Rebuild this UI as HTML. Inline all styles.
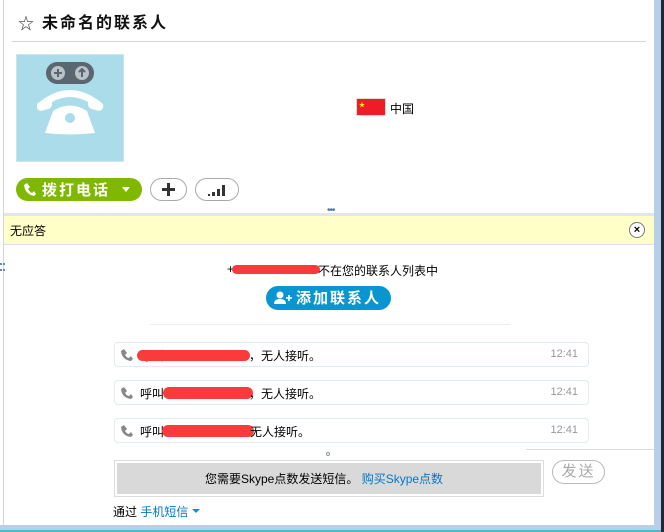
<!DOCTYPE html>
<html><head><meta charset="utf-8"><style>
*{margin:0;padding:0;box-sizing:border-box}
body{width:664px;height:532px;overflow:hidden;background:#fff;position:relative;font-family:"Liberation Sans","Noto Sans CJK SC",sans-serif;font-size:12px;color:#000}
.a{position:absolute}
.red{position:absolute;background:#fb3b3b;border-radius:6px;height:9px}
.msg{position:absolute;left:114px;width:475px;height:25px;border:1px solid #e3eaf0;border-radius:4px;background:#fff}
.msg .tm{position:absolute;right:10px;top:5px;color:#999;font-size:11px}
.msg svg{position:absolute;left:6px;top:6px}
</style></head><body>
<div class="a" style="left:3px;top:0;width:1px;height:525px;background:#d6d6d6"></div>
<div class="a" style="left:654px;top:0;width:7px;height:532px;background:#b9cfe8"></div>
<div class="a" style="left:661px;top:0;width:3px;height:532px;background:#1a2a38"></div>
<div class="a" style="left:0;top:525px;width:661px;height:7px;background:#b9cfe8"></div>
<div class="a" style="left:0;top:530px;width:661px;height:2px;background:#4fb8d8"></div>

<div class="a" style="left:18px;top:10px;font-size:16px;color:#333">☆</div>
<div class="a" style="left:42px;top:9px;font-size:16px;font-weight:bold;letter-spacing:2px;color:#111">未命名的联系人</div>
<div class="a" style="left:12px;top:41px;width:634px;height:1px;background:#d6d6d6"></div>

<div class="a" style="left:16px;top:54px;width:108px;height:108px;background:#abdcea;border:1px solid #cfe3ea"></div>
<svg class="a" style="left:16px;top:54px" width="108" height="108">
<rect x="30" y="8" width="48" height="22" rx="11" fill="#5a6670"/>
<circle cx="42" cy="19" r="7" fill="#b9c2c8"/><circle cx="66" cy="19" r="7" fill="#b9c2c8"/>
<path d="M38 19h8M42 15v8" stroke="#5a6670" stroke-width="2"/><path d="M66 23v-8M63 18l3-3 3 3" stroke="#5a6670" stroke-width="2" fill="none"/>
<path d="M21 50 Q54 22 87 50 Q88 56 83 57 L76 55 Q72 54 72 50 L72 48 Q54 38 36 48 L36 50 Q36 54 32 55 L25 57 Q20 56 21 50Z" fill="#fff"/>
<path d="M29 79 L37 57 Q54 46 71 57 L79 79 Q54 82 29 79Z" fill="#fff"/>
<circle cx="54" cy="64" r="5" fill="#abdcea"/>
</svg>

<div class="a" style="left:356px;top:98px;width:30px;height:18px;background:#ee1c25;border:1px solid #ddd"></div>
<div class="a" style="left:359px;top:100px;color:#ff0;font-size:6px">★</div>
<div class="a" style="left:390px;top:100px;font-size:12px">中国</div>

<div class="a" style="left:16px;top:178px;width:126px;height:23px;background:#7eb800;border-radius:12px"></div>
<svg class="a" style="left:24px;top:183px" width="12" height="13"><path d="M3 0L6 4L4 6Q6 9 8 10L10 8L12 11L10 13Q1 11 0 2Z" fill="#fff"/></svg>
<div class="a" style="left:42px;top:179px;color:#fff;font-size:15px;font-weight:bold;letter-spacing:2px">拨打电话</div>
<div class="a" style="left:122px;top:187px;width:0;height:0;border-left:4px solid transparent;border-right:4px solid transparent;border-top:5px solid #fff"></div>
<div class="a" style="left:150px;top:178px;width:37px;height:23px;border:1px solid #aaa;border-radius:12px"></div>
<svg class="a" style="left:162px;top:183px" width="13" height="13"><path d="M6.5 0v13M0 6.5h13" stroke="#333" stroke-width="3"/></svg>
<div class="a" style="left:195px;top:178px;width:44px;height:23px;border:1px solid #aaa;border-radius:12px"></div>
<svg class="a" style="left:208px;top:182px" width="20" height="15"><rect x="0" y="12" width="2" height="2" fill="#333"/><rect x="4" y="10" width="3" height="4" fill="#333"/><rect x="9" y="7" width="3" height="7" fill="#333"/><rect x="14" y="3" width="3" height="11" fill="#333"/></svg>

<div class="a" style="left:327px;top:205px;color:#5577aa;font-size:10px;letter-spacing:-1px">•••</div>
<div class="a" style="left:4px;top:213px;width:650px;height:3px;background:#e0e6ea"></div>
<div class="a" style="left:4px;top:216px;width:650px;height:29px;background:#ffffc8;border-bottom:1px solid #dde"></div>
<div class="a" style="left:10px;top:222px;font-size:12px">无应答</div>
<div class="a" style="left:629px;top:222px;width:16px;height:16px;border:1px solid #777;border-radius:50%;background:#fff;text-align:center;font-size:11px;line-height:14px;font-weight:bold">×</div>
<div class="a" style="left:0;top:263px;width:3px;height:8px;border-top:2px dotted #6688bb;border-bottom:2px dotted #6688bb"></div>

<div class="a" style="left:227px;top:262px;font-size:12px">+</div>
<div class="red" style="left:232px;top:265px;width:88px"></div>
<div class="a" style="left:318px;top:262px;font-size:12px">不在您的联系人列表中</div>
<div class="a" style="left:266px;top:286px;width:125px;height:24px;background:#0996d0;border-radius:12px"></div>
<svg class="a" style="left:274px;top:291px" width="20" height="14"><circle cx="6" cy="4" r="3.5" fill="#fff"/><path d="M0 13Q0 8 6 8Q12 8 12 13Z" fill="#fff"/><path d="M15 4v6M12 7h6" stroke="#fff" stroke-width="1.6"/></svg>
<div class="a" style="left:296px;top:287px;color:#fff;font-size:15px;font-weight:bold;letter-spacing:2px">添加联系人</div>
<div class="a" style="left:150px;top:324px;width:360px;height:1px;background:#eee"></div>

<div class="msg" style="top:342px"><svg width="12" height="12"><path d="M3 0L6 4L4 6Q6 9 8 9L10 7L12 10L10 12Q1 11 0 2Z" fill="#888"/></svg><span class="tm">12:41</span></div>
<div class="a" style="left:140px;top:347px">呼叫</div>
<div class="red" style="left:137px;top:350px;width:113px;height:11px"></div>
<div class="a" style="left:249px;top:347px">，无人接听。</div>
<div class="msg" style="top:380px"><svg width="12" height="12"><path d="M3 0L6 4L4 6Q6 9 8 9L10 7L12 10L10 12Q1 11 0 2Z" fill="#888"/></svg><span class="tm">12:41</span></div>
<div class="a" style="left:140px;top:385px">呼叫+</div>
<div class="red" style="left:163px;top:387px;width:90px;height:12px"></div>
<div class="a" style="left:249px;top:385px">，无人接听。</div>
<div class="msg" style="top:418px"><svg width="12" height="12"><path d="M3 0L6 4L4 6Q6 9 8 9L10 7L12 10L10 12Q1 11 0 2Z" fill="#888"/></svg><span class="tm">12:41</span></div>
<div class="a" style="left:140px;top:423px">呼叫</div>
<div class="red" style="left:162px;top:425px;width:92px;height:12px"></div>
<div class="a" style="left:250px;top:423px">无人接听。</div>

<div class="a" style="left:326px;top:452px;width:4px;height:4px;border:1px solid #89a;border-radius:50%"></div>
<div class="a" style="left:526px;top:449px;width:128px;height:1px;background:#ddd"></div>
<div class="a" style="left:114px;top:460px;width:430px;height:37px;border:1px solid #ddd;background:#fff"></div>
<div class="a" style="left:117px;top:463px;width:424px;height:31px;background:#d9d9d9"></div>
<div class="a" style="left:205px;top:470px;font-size:12px">您需要Skype点数发送短信。 <span style="color:#0078c8">购买Skype点数</span></div>
<div class="a" style="left:552px;top:460px;width:53px;height:24px;border:1px solid #bbb;border-radius:12px;color:#aaa;font-size:15px;text-align:center;line-height:22px;letter-spacing:2px">发送</div>
<div class="a" style="left:113px;top:503px;font-size:12px">通过 <span style="color:#0078c8">手机短信</span></div>
<div class="a" style="left:192px;top:509px;width:0;height:0;border-left:4px solid transparent;border-right:4px solid transparent;border-top:4px solid #0996d0"></div>
</body></html>
